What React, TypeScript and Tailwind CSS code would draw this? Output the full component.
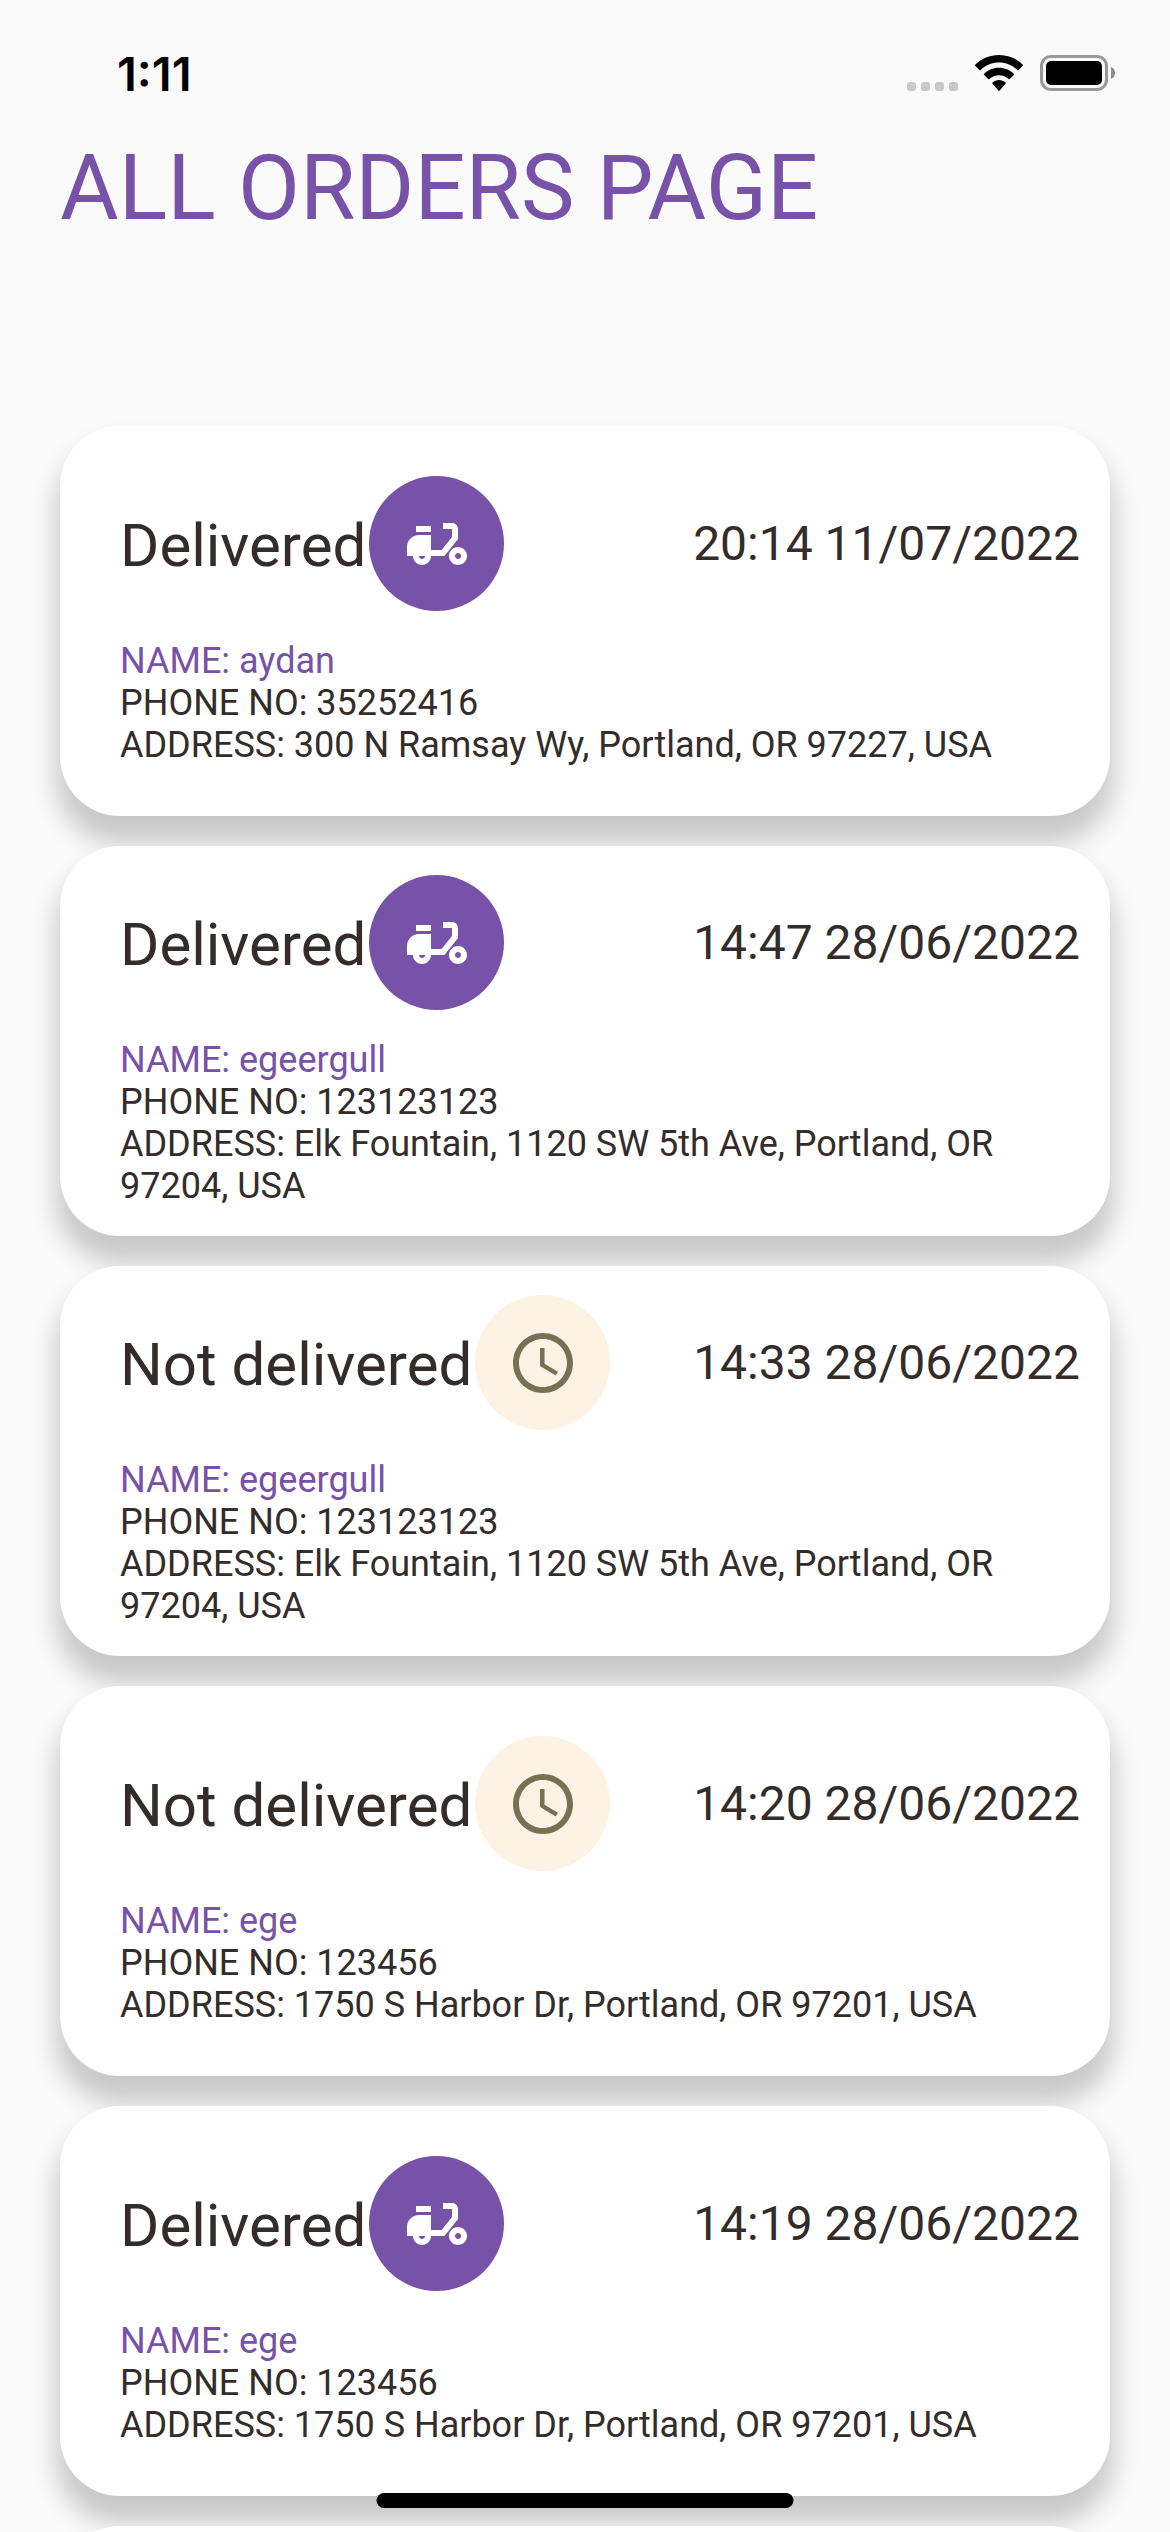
type Order = {
  delivered: boolean;
  placedAt: string;
  name: string;
  phone: string;
  address: string;
};

const orders: Order[] = [
  {
    delivered: true,
    placedAt: "20:14 11/07/2022",
    name: "aydan",
    phone: "35252416",
    address: "300 N Ramsay Wy, Portland, OR 97227, USA",
  },
  {
    delivered: true,
    placedAt: "14:47 28/06/2022",
    name: "egeergull",
    phone: "123123123",
    address: "Elk Fountain, 1120 SW 5th Ave, Portland, OR 97204, USA",
  },
  {
    delivered: false,
    placedAt: "14:33 28/06/2022",
    name: "egeergull",
    phone: "123123123",
    address: "Elk Fountain, 1120 SW 5th Ave, Portland, OR 97204, USA",
  },
  {
    delivered: false,
    placedAt: "14:20 28/06/2022",
    name: "ege",
    phone: "123456",
    address: "1750 S Harbor Dr, Portland, OR 97201, USA",
  },
  {
    delivered: true,
    placedAt: "14:19 28/06/2022",
    name: "ege",
    phone: "123456",
    address: "1750 S Harbor Dr, Portland, OR 97201, USA",
  },
];

function ScooterIcon() {
  return (
    <svg viewBox="0 0 24 24" className="size-[72px] fill-white" aria-hidden="true">
      <path d="M19 7c0-1.1-.9-2-2-2h-3v2h3v2.65L13.52 14H10V9H6c-2.21 0-4 1.79-4 4v3h2c0 1.66 1.34 3 3 3s3-1.34 3-3h4.48L19 10.35V7zM7 17c-.55 0-1-.45-1-1h2c0 .55-.45 1-1 1z" />
      <path d="M5 6h5v2H5z" />
      <path d="M19 13c-1.66 0-3 1.34-3 3s1.34 3 3 3 3-1.34 3-3-1.34-3-3-3zm0 4c-.55 0-1-.45-1-1s.45-1 1-1 1 .45 1 1-.45 1-1 1z" />
    </svg>
  );
}

function ClockIcon() {
  return (
    <svg viewBox="0 0 24 24" className="size-[72px] fill-[#787055]" aria-hidden="true">
      <path d="M11.99 2C6.47 2 2 6.48 2 12s4.47 10 9.99 10C17.52 22 22 17.52 22 12S17.52 2 11.99 2zM12 20c-4.42 0-8-3.58-8-8s3.58-8 8-8 8 3.58 8 8-3.58 8-8 8z" />
      <path d="M12.5 7H11v6l5.25 3.15.75-1.23-4.5-2.67z" />
    </svg>
  );
}

function StatusBar() {
  return (
    <div className="flex h-36 shrink-0 items-start justify-between pr-[55px] pl-[117px]">
      <span className="pt-[46px] font-['Inter',sans-serif] text-[47px] leading-[56px] font-semibold text-black">
        1:11
      </span>
      <div className="flex items-end pt-[55px]">
        <svg viewBox="0 0 51 9" className="mr-[17px] h-[9px] w-[51px] fill-[#c8c8c8]" aria-hidden="true">
          <rect x="0" width="9" height="9" rx="3" />
          <rect x="14" width="9" height="9" rx="3" />
          <rect x="28" width="9" height="9" rx="3" />
          <rect x="42" width="9" height="9" rx="3" />
        </svg>
        <svg viewBox="0 0 48 36" className="mr-[17px] h-9 w-12 fill-black" aria-hidden="true">
          <path d="M24 0C14.800 0 6.400 3.600 .4 9.600a.9.9 0 0 0 0 1.300l4 4a.9.9 0 0 0 1.300 0C10.500 10.300 17 7.600 24 7.600s13.500 2.700 18.300 7.300a.9.9 0 0 0 1.300 0l4-4a.9.9 0 0 0 0-1.300C41.600 3.600 33.200 0 24 0z" />
          <path d="M24 12.700c-5.800 0-11 2.300-14.900 6a.9.9 0 0 0 0 1.300l4.100 4a.9.9 0 0 0 1.200 0c2.600-2.300 5.900-3.700 9.600-3.700s7 1.400 9.600 3.700a.9.9 0 0 0 1.200 0l4.100-4a.9.9 0 0 0 0-1.300c-3.900-3.700-9.100-6-14.900-6z" />
          <path d="M24 25c-2.500 0-4.700.9-6.500 2.400a.9.9 0 0 0 0 1.300l5.800 6.900a.9.9 0 0 0 1.400 0l5.800-6.900a.9.9 0 0 0 0-1.300C28.700 25.900 26.500 25 24 25z" />
        </svg>
        <svg viewBox="0 0 75 36" className="h-9 w-[75px]" aria-hidden="true">
          <rect x="1.500" y="1.500" width="65" height="33" rx="9.500" fill="none" stroke="#999" strokeWidth="3" />
          <rect x="6" y="6" width="56" height="24" rx="5" />
          <path d="M71 12c2.500 1 4 3.300 4 6s-1.500 5-4 6z" fill="#8c8c8c" />
        </svg>
      </div>
    </div>
  );
}

function OrderCard({ order }: { order: Order }) {
  return (
    <li className="flex min-h-[390px] shrink-0 flex-col justify-center gap-[29px] rounded-[60px] bg-white pr-[30px] pl-[60px] shadow-[0_23px_26px_4px_rgba(0,0,0,0.2)]">
      <div className="flex items-center justify-between">
        <div className="flex items-center gap-[3px]">
          <h2 className="pt-1 text-[60px] leading-[70px]">
            {order.delivered ? "Delivered" : "Not delivered"}
          </h2>
          {order.delivered ? (
            <span className="flex size-[135px] items-center justify-center rounded-full bg-[#7851a8]">
              <ScooterIcon />
            </span>
          ) : (
            <span className="flex size-[135px] items-center justify-center rounded-full bg-[#fcf3e4]">
              <ClockIcon />
            </span>
          )}
        </div>
        <time className="text-5xl leading-[56px]">{order.placedAt}</time>
      </div>
      <div className="pr-[30px] text-4xl leading-[42px]">
        <p className="text-[#7851a8]">NAME: {order.name}</p>
        <p>PHONE NO: {order.phone}</p>
        <p>ADDRESS: {order.address}</p>
      </div>
    </li>
  );
}

export default function App() {
  return (
    <div className="relative flex h-screen flex-col overflow-hidden bg-[#fafafa] font-['Roboto',sans-serif] text-[#332c2b]">
      <StatusBar />
      <h1 className="shrink-0 px-[60px] text-[90px] leading-[90px] text-[#7851a8]">ALL ORDERS PAGE</h1>
      <main className="mt-[132px] min-h-0 flex-1 overflow-y-auto [scrollbar-width:none]">
        <ul className="flex flex-col gap-[30px] px-[60px] pt-[60px]">
          {orders.map((order) => (
            <OrderCard key={order.placedAt} order={order} />
          ))}
          <li className="h-[390px] shrink-0 rounded-[60px] bg-white" aria-hidden="true" />
        </ul>
      </main>
      <div className="absolute bottom-6 left-1/2 h-[15px] w-[417px] -translate-x-1/2 rounded-full bg-black" />
    </div>
  );
}
